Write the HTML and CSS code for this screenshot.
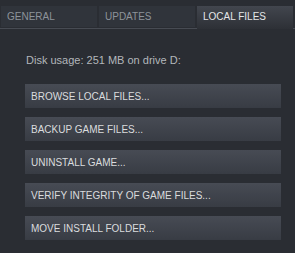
FILE: index.html
```html
<!DOCTYPE html>
<html lang="en">
<head>
  <meta charset="UTF-8">
  <title>Properties - Local Files</title>
  <link rel="stylesheet" href="styles.css">
</head>
<body>
  <div class="tabs">
    <div class="tab">GENERAL</div>
    <div class="tab">UPDATES</div>
    <div class="tab active">LOCAL FILES</div>
  </div>

  <div class="panel">
    <p class="usage">Disk usage: 251 MB on drive D:</p>
    <button class="action">BROWSE LOCAL FILES...</button>
    <button class="action">BACKUP GAME FILES...</button>
    <button class="action">UNINSTALL GAME...</button>
    <button class="action">VERIFY INTEGRITY OF GAME FILES...</button>
    <button class="action">MOVE INSTALL FOLDER...</button>
  </div>
</body>
</html>
```

FILE: styles.css
```css
body {
  margin: 0;
  background-color: #2a2d33;
  font-family: "Liberation Sans", Arial, sans-serif;
  overflow: hidden;
}
.tabs {
  display: flex;
  gap: 2px;
  padding: 6px 0 0 1px;
  border-bottom: 1px solid #474b53;
  height: 22px;
}
.tab {
  width: 96px;
  height: 21px;
  line-height: 21px;
  padding-left: 6px;
  box-sizing: border-box;
  font-size: 10px;
  color: #8d939a;
  background-color: #30343b;
}
.tab.active {
  height: 23px;
  margin-bottom: -1px;
  color: #e4e6e8;
  background: linear-gradient(to bottom, #42464e, #2d3036);
}
.panel {
  padding: 0 14px 0 25px;
}
.usage {
  margin: 25px 0 17px 1px;
  font-size: 11px;
  line-height: 13px;
  color: #b3b7bb;
}
.action {
  display: block;
  width: 256px;
  height: 24px;
  margin: 0 0 9px 0;
  padding: 0 0 0 6px;
  border: none;
  text-align: left;
  font-family: "Liberation Sans", Arial, sans-serif;
  font-size: 10px;
  color: #dadcde;
  background: linear-gradient(to bottom, #474b54, #383c44);
  cursor: pointer;
}
.action:hover {
  background: linear-gradient(to bottom, #51565f, #41454d);
}
```
